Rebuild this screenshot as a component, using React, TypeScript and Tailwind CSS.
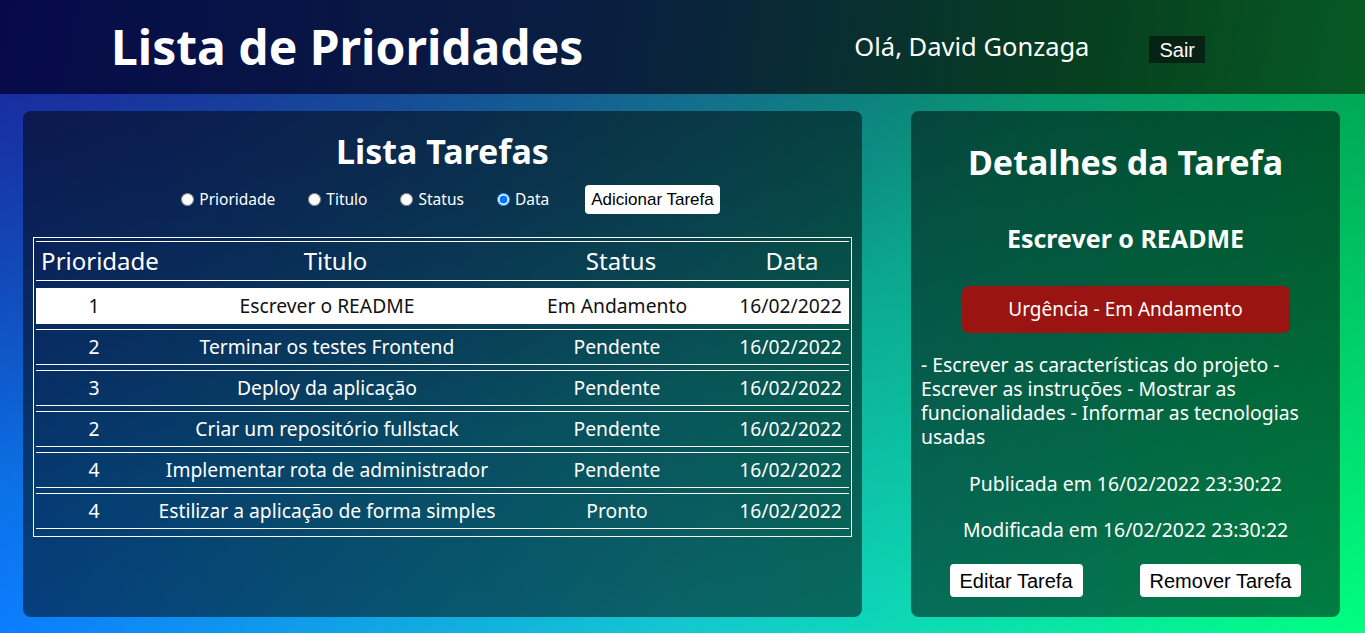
import { useState } from 'react';

type Tarefa = {
  id: number;
  prioridade: number;
  titulo: string;
  status: string;
  data: string;
};

const tarefas: Tarefa[] = [
  { id: 1, prioridade: 1, titulo: 'Escrever o README', status: 'Em Andamento', data: '16/02/2022' },
  { id: 2, prioridade: 2, titulo: 'Terminar os testes Frontend', status: 'Pendente', data: '16/02/2022' },
  { id: 3, prioridade: 3, titulo: 'Deploy da aplicação', status: 'Pendente', data: '16/02/2022' },
  { id: 4, prioridade: 2, titulo: 'Criar um repositório fullstack', status: 'Pendente', data: '16/02/2022' },
  { id: 5, prioridade: 4, titulo: 'Implementar rota de administrador', status: 'Pendente', data: '16/02/2022' },
  { id: 6, prioridade: 4, titulo: 'Estilizar a aplicação de forma simples', status: 'Pronto', data: '16/02/2022' },
];

const filtros = ['Prioridade', 'Titulo', 'Status', 'Data'];

function Header() {
  return (
    <header className="flex h-[94px] items-center pl-[111px] pr-[160px] bg-[linear-gradient(100deg,#060a4a_0%,#0a1f40_45%,#06401f_80%,#075a24_100%)]">
      <h1 className="text-[48px] font-bold leading-none text-white">Lista de Prioridades</h1>
      <span className="ml-auto text-[25.5px] leading-none text-white">Olá, David Gonzaga</span>
      <button className="ml-[60px] mt-[5px] h-[27px] px-[10px] bg-[#072113] text-[20px] leading-none text-white font-['Liberation_Sans',Arial,sans-serif]">
        Sair
      </button>
    </header>
  );
}

function ListaTarefas({ selecionada, onSelect }: { selecionada: number; onSelect: (id: number) => void }) {
  return (
    <section className="w-[839px] rounded-lg bg-black/50 px-[10px] pt-[23px]">
      <h2 className="text-center text-[34px] font-bold leading-none text-white">Lista Tarefas</h2>

      <div className="mt-[17px] flex h-[29px] items-center justify-center pl-[16px] text-[15.5px] text-white">
        {filtros.map((f) => (
          <label key={f} className="mr-[33px] flex items-center">
            <input
              type="radio"
              name="ordem"
              defaultChecked={f === 'Data'}
              className="m-0 h-[13px] w-[13px]"
            />
            <span className="ml-[5px] leading-none">{f}</span>
          </label>
        ))}
        <button className="ml-[3px] h-[29px] rounded-[4px] bg-white px-[6px] text-[17px] text-black font-['Liberation_Sans',Arial,sans-serif]">
          Adicionar Tarefa
        </button>
      </div>

      <div className="mt-[23px] border border-white pt-[3px] pb-[7px] pl-[2px] pr-[2px]">
        <div className="grid h-[40px] grid-cols-[128px_343px_228px_1fr] items-center border-y border-white text-[24px] text-white">
          <span className="text-center">Prioridade</span>
          <span className="text-center">Titulo</span>
          <span className="text-center">Status</span>
          <span className="text-center">Data</span>
        </div>
        <div className="mt-[7px] flex flex-col gap-[5px]">
          {tarefas.map((t) => (
            <div
              key={t.id}
              onClick={() => onSelect(t.id)}
              className={
                'grid h-[36px] cursor-pointer grid-cols-[116px_350px_230px_1fr] items-center border-y border-white text-[19.3px] ' +
                (t.id === selecionada ? 'bg-white text-[#111]' : 'text-white')
              }
            >
              <span className="text-center">{t.prioridade}</span>
              <span className="text-center">{t.titulo}</span>
              <span className="text-center">{t.status}</span>
              <span className="text-center">{t.data}</span>
            </div>
          ))}
        </div>
      </div>
    </section>
  );
}

function DetalhesTarefa({ tarefa }: { tarefa: Tarefa }) {
  return (
    <section className="flex w-[429px] flex-col items-center rounded-lg bg-black/50 px-[10px] pt-[34px] text-white">
      <h2 className="text-[34px] font-bold leading-none">Detalhes da Tarefa</h2>
      <h3 className="mt-[47px] text-[25px] font-bold leading-none">{tarefa.titulo}</h3>
      <div className="mt-[35px] flex h-[47px] w-[328px] items-center justify-center rounded-[7px] bg-[#9a1511] text-[19px]">
        Urgência - {tarefa.status}
      </div>
      <p className="mt-[20px] self-stretch text-[19.4px] leading-[24px]">
        - Escrever as características do projeto - Escrever as instruções - Mostrar as funcionalidades -
        Informar as tecnologias usadas
      </p>
      <p className="mt-[23px] text-[19.4px] leading-[24px]">Publicada em 16/02/2022 23:30:22</p>
      <p className="mt-[22px] text-[19.4px] leading-[24px]">Modificada em 16/02/2022 23:30:22</p>
      <div className="mt-[22px] flex gap-[57px] font-['Liberation_Sans',Arial,sans-serif]">
        <button className="h-[33px] rounded-[4px] bg-white px-[10px] text-[20px] text-black">Editar Tarefa</button>
        <button className="h-[33px] rounded-[4px] bg-white px-[10px] text-[20px] text-black">Remover Tarefa</button>
      </div>
    </section>
  );
}

export default function App() {
  const [selecionada, setSelecionada] = useState(1);
  const tarefa = tarefas.find((t) => t.id === selecionada) ?? tarefas[0];

  return (
    <div className="min-h-screen font-['Noto_Sans',sans-serif] bg-[radial-gradient(ellipse_at_top_left,rgba(45,0,150,0.55),rgba(45,0,150,0)_55%),linear-gradient(to_bottom,rgba(0,0,0,0.4),rgba(0,0,0,0)),linear-gradient(to_right,#0c7cff_0%,#14c8d0_50%,#00ff80_100%)]">
      <Header />
      <main className="flex h-[539px] gap-[49px] pl-[23px] pt-[17px] pb-[16px]">
        <ListaTarefas selecionada={selecionada} onSelect={setSelecionada} />
        <DetalhesTarefa tarefa={tarefa} />
      </main>
    </div>
  );
}
